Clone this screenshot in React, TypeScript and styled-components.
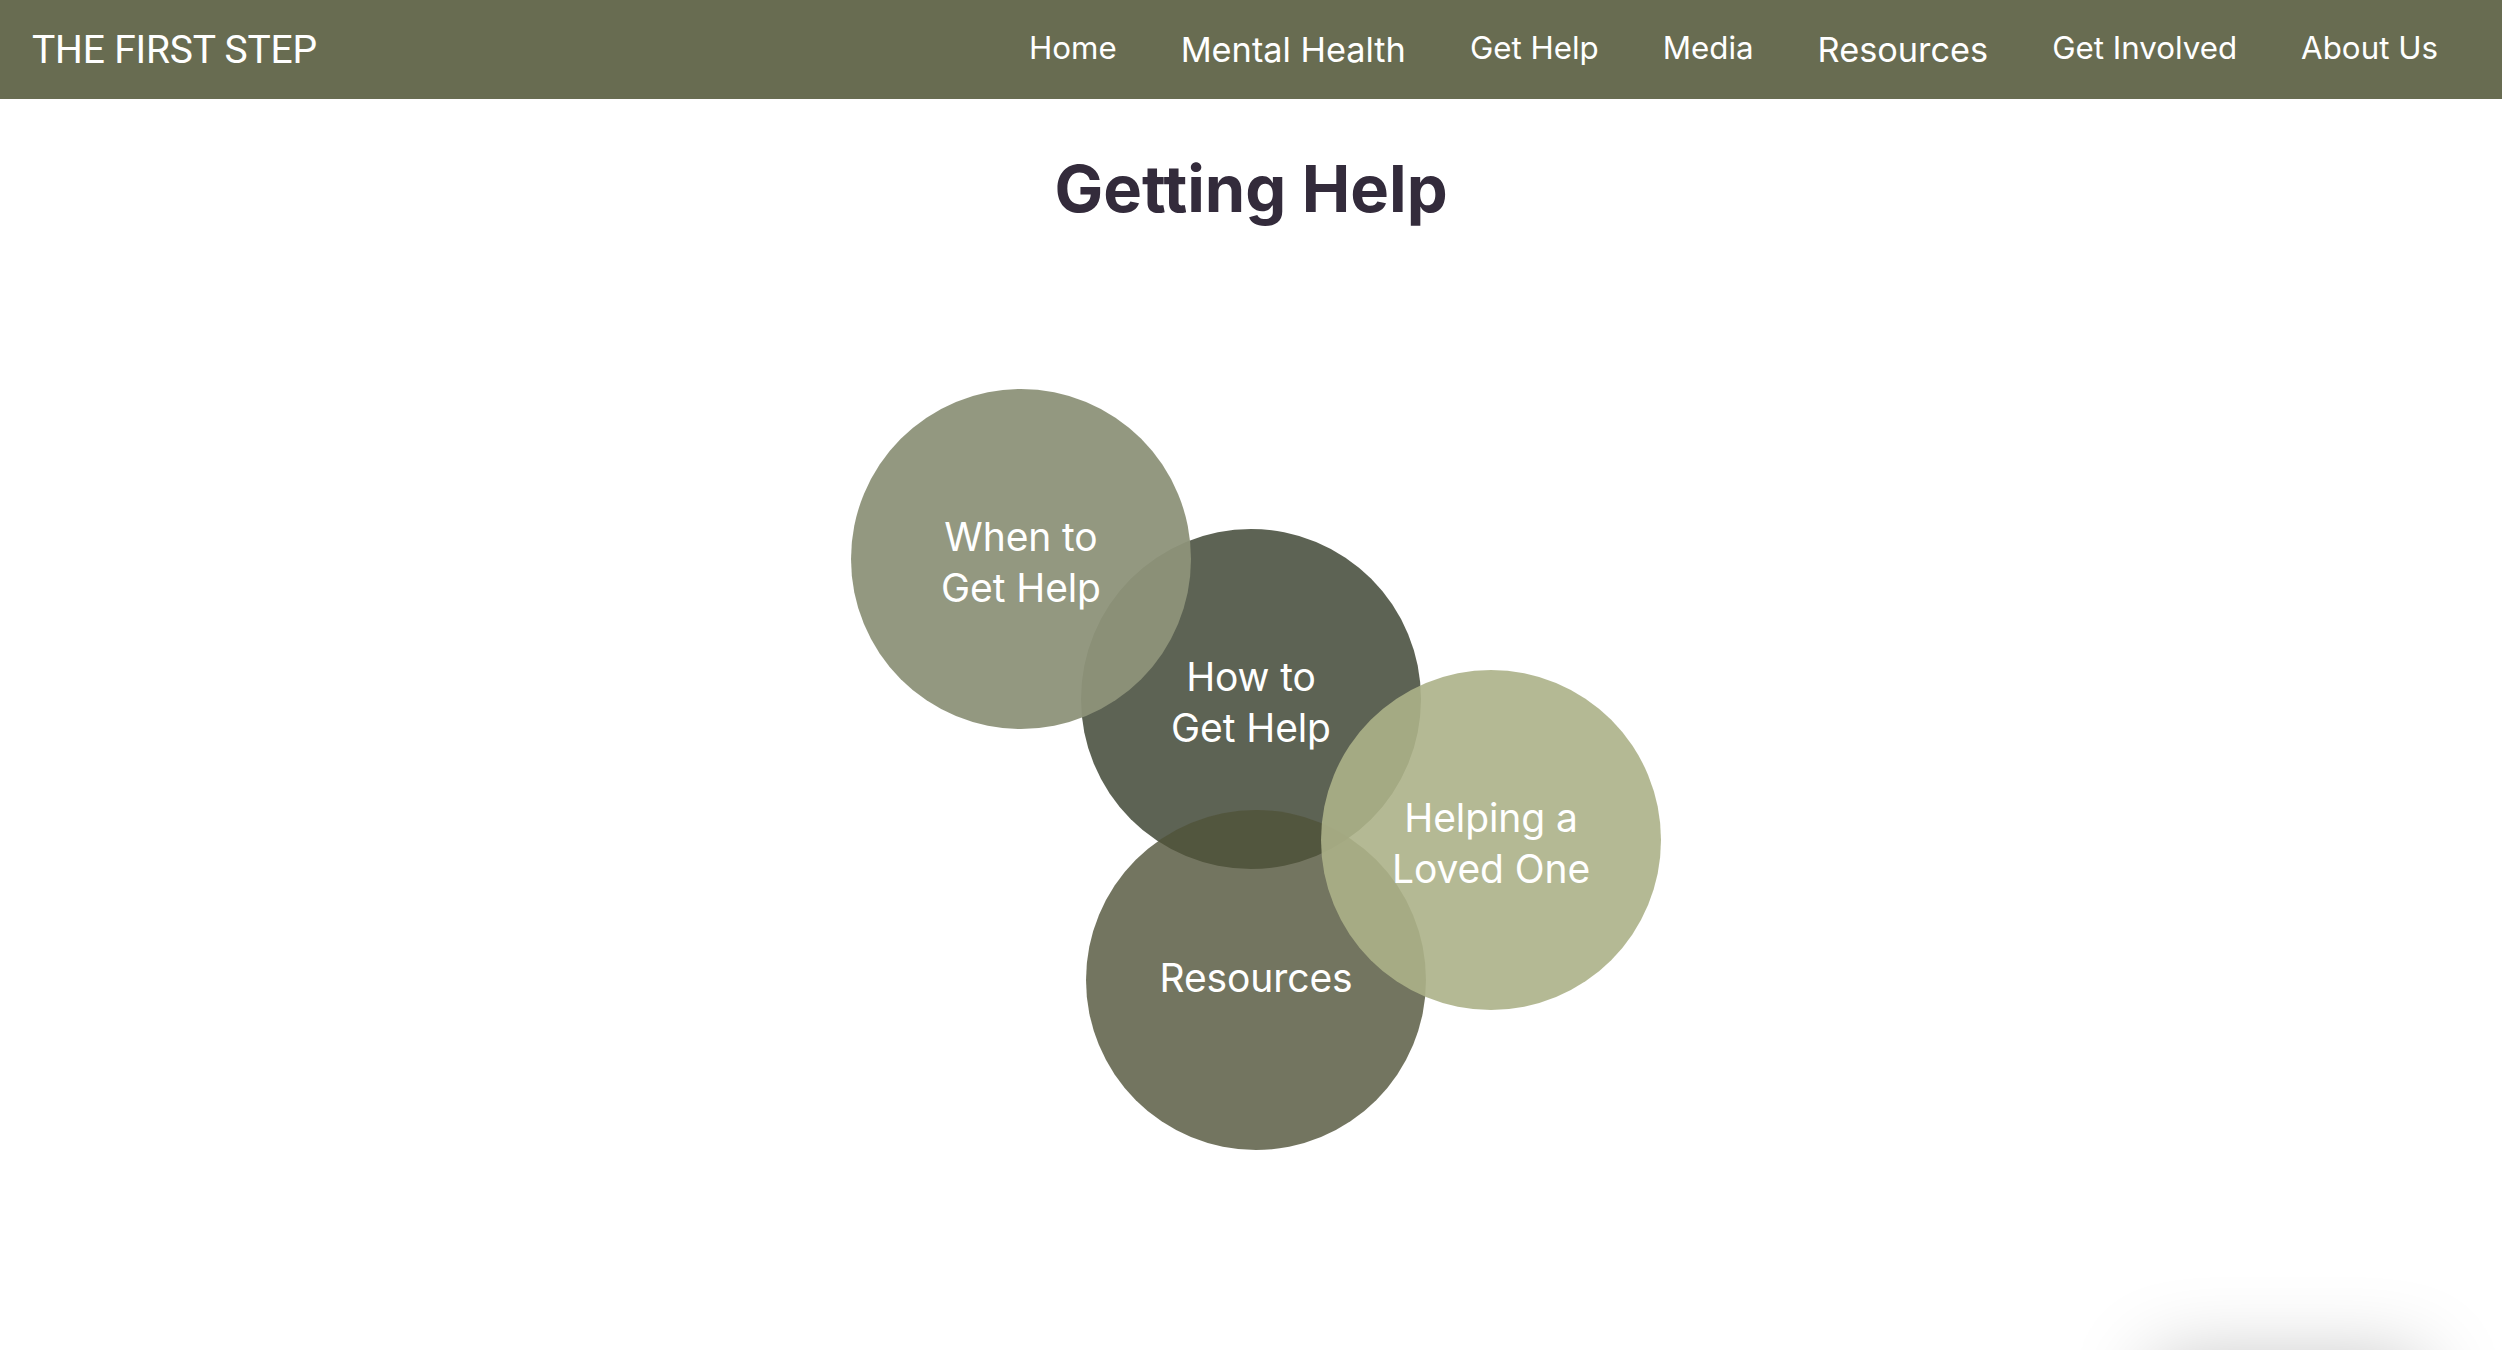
import React from "react";
import styled, { createGlobalStyle } from "styled-components";

const GlobalStyle = createGlobalStyle`
  html, body {
    margin: 0;
    padding: 0;
    background: #ffffff;
  }
  body {
    font-family: Inter, "Noto Sans", sans-serif;
    overflow: hidden;
  }
  * { box-sizing: border-box; }
`;

const Page = styled.div`
  width: 100%;
  min-height: 1350px;
  display: flex;
  flex-direction: column;
`;

const Header = styled.header`
  height: 99px;
  background: #686c51;
  display: flex;
  align-items: center;
  justify-content: space-between;
  padding: 0 64px 0 32px;
`;

const Logo = styled.a`
  font-family: Roboto, "Liberation Sans", sans-serif;
  font-size: 39px;
  font-weight: 400;
  color: #ffffff;
  text-decoration: none;
  letter-spacing: -0.2px;
`;

const Nav = styled.nav`
  display: flex;
  align-items: center;
  gap: 64px;
`;

const NavLink = styled.a<{ $big?: boolean }>`
  font-family: Inter, "Noto Sans", sans-serif;
  font-size: ${(p) => (p.$big ? "34.3px" : "31.3px")};
  padding-bottom: ${(p) => (p.$big ? "0" : "3px")};
  color: #ffffff;
  text-decoration: none;
  font-weight: 400;
  letter-spacing: 0;
  white-space: nowrap;
`;

const Main = styled.main`
  display: flex;
  flex-direction: column;
  align-items: center;
  padding-top: 51px;
`;

const Title = styled.h1`
  margin: 0;
  font-family: Inter, "Noto Sans", sans-serif;
  font-weight: 700;
  font-size: 65px;
  line-height: 1.2;
  color: #332b3b;
  letter-spacing: 0;
`;

const Diagram = styled.div`
  position: relative;
  width: 1000px;
  height: 761px;
  margin-top: 161px;
`;

const Circle = styled.a<{ $bg: string; $x: number; $y: number; $z: number; $single?: boolean }>`
  position: absolute;
  left: ${(p) => p.$x}px;
  top: ${(p) => p.$y}px;
  z-index: ${(p) => p.$z};
  width: 340px;
  height: 340px;
  border-radius: 50%;
  background: ${(p) => p.$bg};
  display: flex;
  align-items: center;
  justify-content: center;
  padding: ${(p) => (p.$single ? "0 0 6px 0" : "6px 0 0 0")};
  text-align: center;
  color: #ffffff;
  text-decoration: none;
  font-family: Inter, "Noto Sans", sans-serif;
  font-size: 39px;
  line-height: 51px;
  letter-spacing: -0.1px;
`;

const Widget = styled.div`
  position: fixed;
  right: 79px;
  bottom: -110px;
  width: 270px;
  height: 100px;
  border-radius: 12px;
  background: #ffffff;
  box-shadow: 0 0 80px rgba(0, 0, 0, 0.25);
`;

const navItems: { label: string; big?: boolean }[] = [
  { label: "Home" },
  { label: "Mental Health", big: true },
  { label: "Get Help" },
  { label: "Media" },
  { label: "Resources", big: true },
  { label: "Get Involved" },
  { label: "About Us" },
];

const circles = [
  { lines: ["How to", "Get Help"], bg: "rgb(93, 99, 84)", x: 330, y: 140, z: 1 },
  { lines: ["When to", "Get Help"], bg: "rgba(141, 146, 121, 0.95)", x: 100, y: 0, z: 2 },
  { lines: ["Resources"], bg: "rgba(80, 83, 56, 0.8)", x: 335, y: 421, z: 3 },
  { lines: ["Helping a", "Loved One"], bg: "rgba(172, 177, 136, 0.9)", x: 570, y: 281, z: 4 },
];

export default function App() {
  return (
    <Page>
      <GlobalStyle />
      <Header>
        <Logo href="#">THE FIRST STEP</Logo>
        <Nav>
          {navItems.map((n) => (
            <NavLink key={n.label} href="#" $big={n.big}>
              {n.label}
            </NavLink>
          ))}
        </Nav>
      </Header>
      <Main>
        <Title>Getting Help</Title>
        <Diagram>
          {circles.map((c) => (
            <Circle
              key={c.lines.join(" ")}
              href="#"
              $bg={c.bg}
              $x={c.x}
              $y={c.y}
              $z={c.z}
              $single={c.lines.length === 1}
            >
              <span>
                {c.lines.map((l, i) => (
                  <React.Fragment key={l}>
                    {i > 0 && <br />}
                    {l}
                  </React.Fragment>
                ))}
              </span>
            </Circle>
          ))}
        </Diagram>
      </Main>
      <Widget />
    </Page>
  );
}
